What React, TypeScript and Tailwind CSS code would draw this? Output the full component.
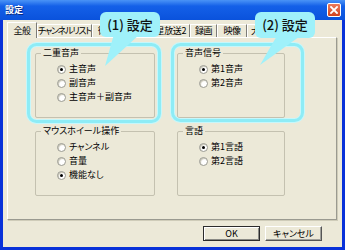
import React from 'react';

const jp = "font-['Noto_Sans_CJK_JP',sans-serif] [font-feature-settings:'palt']";

const Radio: React.FC<{ label: string; checked?: boolean }> = ({ label, checked }) => (
  <div className="flex h-[14px] items-center gap-[3px]">
    <span className="flex h-[9px] w-[9px] items-center justify-center rounded-full border border-[#9a9a90] bg-white shadow-[inset_1px_1px_1px_#c9c6b6]">
      {checked && <span className="h-[3px] w-[3px] rounded-full bg-black"></span>}
    </span>
    <span className="whitespace-nowrap text-[9px] leading-[12px] text-black">{label}</span>
  </div>
);

const Group: React.FC<{ title: string; items: string[]; selected: number }> = ({ title, items, selected }) => (
  <div className="relative h-[65px] rounded-[2px] border border-[#c4c1b0] pl-[21px] pt-[8px]">
    {/* caption sits over the top border, like a legend */}
    <span className="absolute -top-[7px] left-[5px] whitespace-nowrap bg-[#ece9d8] px-[2px] text-[9px] leading-[12px] text-black">
      {title}
    </span>
    {items.map((item, i) => (
      <Radio key={i} label={item} checked={i === selected} />
    ))}
  </div>
);

const tabs = [
  { name: '全般', w: 'w-[30px]', t: 'tracking-[-0.4px]' },
  { name: 'チャンネルリスト', w: 'w-[55px]', t: 'tracking-[-1.2px] text-[8.5px]' },
  { name: '衛星放送1', w: 'w-[51px]', t: 'tracking-[-0.4px]' },
  { name: '衛星放送2', w: 'w-[47px]', t: 'tracking-[-0.4px]' },
  { name: '録画', w: 'w-[27px]', t: 'tracking-[-0.4px]' },
  { name: '映像', w: 'w-[30px]', t: 'tracking-[-0.4px]' },
  { name: '大画面', w: 'w-[34px]', t: 'tracking-[-0.4px]' },
];

const Callouts: React.FC = () => (
  <svg className="pointer-events-none absolute left-0 top-0" width="345" height="250" viewBox="0 0 345 250">
    {/* outlines around the two groups */}
    <rect x="28.5" y="44.5" width="131" height="77" rx="8" fill="none" stroke="#c6f7fb" strokeWidth="5" />
    <rect x="28.5" y="44.5" width="131" height="77" rx="8" fill="none" stroke="#8eecf6" strokeWidth="3" />
    <rect x="172.5" y="44.5" width="130" height="76" rx="8" fill="none" stroke="#c6f7fb" strokeWidth="5" />
    <rect x="172.5" y="44.5" width="130" height="76" rx="8" fill="none" stroke="#8eecf6" strokeWidth="3" />

    {/* bubble 1 */}
    <polygon points="114,34 140,34 105,66" fill="#9ff1fa" />
    <rect x="100" y="12" width="60" height="25" rx="6" fill="#9ff1fa" />
    <text x="130" y="29.5" textAnchor="middle" fontSize="13" fontWeight="500" fill="#111"
      fontFamily="'Noto Sans CJK JP', sans-serif">(1) 設定</text>

    {/* bubble 2 */}
    <polygon points="278,34 303,34 260,65" fill="#9ff1fa" />
    <rect x="255" y="12" width="60" height="26" rx="6" fill="#9ff1fa" />
    <text x="285" y="30" textAnchor="middle" fontSize="13" fontWeight="500" fill="#111"
      fontFamily="'Noto Sans CJK JP', sans-serif">(2) 設定</text>
  </svg>
);

const App: React.FC = () => {
  return (
    <div className={`relative flex h-[250px] w-[345px] flex-col bg-[#0831d9] ${jp}`}>
      {/* Title bar */}
      <div className="flex h-[20px] items-center justify-between bg-linear-to-b from-[#4a93f6] via-[#1460e8] via-30% to-[#0a52dc] pl-[5px] pr-[4px]">
        <span className="text-[9px] font-bold leading-[12px] text-white [text-shadow:1px_1px_0_#0a2a80]">設定</span>
        <div className="flex h-[14px] w-[14px] items-center justify-center rounded-[2px] border border-white bg-linear-to-b from-[#ec7a5a] to-[#d2421c]">
          <svg width="8" height="8" viewBox="0 0 8 8">
            <path d="M1 1 L7 7 M7 1 L1 7" stroke="white" strokeWidth="1.8" strokeLinecap="square" />
          </svg>
        </div>
      </div>

      {/* Body */}
      <div className="mx-[3px] mb-[3px] flex flex-1 flex-col bg-[#ece9d8] pl-[4px] pt-[2px]">
        {/* Tabs */}
        <div className="flex h-[15px] items-end">
          {tabs.map((tab, i) => (
            <div
              key={i}
              className={`flex items-center justify-center overflow-hidden whitespace-nowrap border-l border-t border-r border-l-white border-t-white border-r-[#7d7d78] bg-[#ece9d8] text-[9px] leading-[12px] text-black ${tab.w} ${tab.t} ${
                i === 0 ? 'relative z-10 -mb-[1px] h-[16px]' : 'h-[13px]'
              }`}
            >
              {tab.name}
            </div>
          ))}
        </div>

        {/* Panel */}
        <div className="h-[183px] w-[330px] border border-white border-b-[#9a9a90] border-r-[#9a9a90] pl-[27px] pt-[15px] shadow-[1px_1px_0_#cfccb9]">
          <div className="grid grid-cols-[120px_108px] gap-x-[22px] gap-y-[13px]">
            <Group title="二重音声" items={['主音声', '副音声', '主音声＋副音声']} selected={0} />
            <Group title="音声信号" items={['第1音声', '第2音声']} selected={0} />
            <Group title="マウスホイール操作" items={['チャンネル', '音量', '機能なし']} selected={2} />
            <Group title="言語" items={['第1言語', '第2言語']} selected={0} />
          </div>
        </div>

        {/* Buttons */}
        <div className="mt-[6px] flex justify-end gap-[5px] pr-[20px]">
          <button className="flex h-[15px] w-[57px] items-center justify-center border border-[#2c2c2c] bg-[#ece9d8] text-[9px] leading-[12px] text-black shadow-[inset_1px_1px_0_#fff,inset_-1px_-1px_0_#8a8a84]">
            OK
          </button>
          <button className="flex h-[15px] w-[57px] items-center justify-center border border-white border-b-[#555] border-r-[#555] bg-[#ece9d8] text-[9px] leading-[12px] text-black shadow-[inset_-1px_-1px_0_#a0a09a]">
            キャンセル
          </button>
        </div>
      </div>

      <Callouts />
    </div>
  );
};

export default App;
